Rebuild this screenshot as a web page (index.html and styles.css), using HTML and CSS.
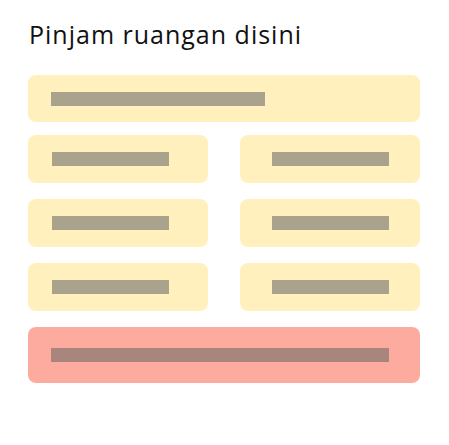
FILE: index.html
```html
<!DOCTYPE html>
<html lang="id">

<head>
    <meta charset="UTF-8">
    <meta name="viewport" content="width=device-width, initial-scale=1.0">
    <title>Pinjam ruangan</title>
    <link rel="stylesheet" href="styles.css">
</head>

<body>
    <!-- form skeleton: judul, field lebar, 3 baris 2 kolom, tombol -->
    <div class="page">
        <h1 class="title">Pinjam ruangan disini</h1>
        <div class="field wide">
            <span class="bar bar-wide"></span>
        </div>
        <div class="grid">
            <div class="field"><span class="bar"></span></div>
            <div class="field center"><span class="bar"></span></div>
            <div class="field"><span class="bar"></span></div>
            <div class="field center"><span class="bar"></span></div>
            <div class="field"><span class="bar"></span></div>
            <div class="field center"><span class="bar"></span></div>
        </div>
        <div class="button">
            <span class="bar bar-button"></span>
        </div>
    </div>
</body>

</html>
```

FILE: styles.css
```css
body {
    margin: 0;
    background: #fff;
    font-family: "Open Sans", "Liberation Sans", sans-serif;
}
.page {
    width: 392px;
    padding: 16px 0 0 28px;
}
.title {
    margin: 0 0 23px 1px;
    font-size: 25px;
    font-weight: 400;
    line-height: 36px;
    color: #111;
    letter-spacing: 1px;
}
.field {
    height: 48px;
    background-color: #fff0be;
    border-radius: 8px;
    display: flex;
    align-items: center;
    padding-left: 24px;
}
.field.wide {
    height: 47px;
    padding-left: 23px;
}
.field.center {
    justify-content: center;
    padding-left: 0;
}
.grid {
    display: grid;
    grid-template-columns: 180px 180px;
    column-gap: 32px;
    row-gap: 16px;
    margin-top: 13px;
}
.bar {
    display: block;
    width: 117px;
    height: 14px;
    background-color: #a9a28d;
}
.bar-wide {
    width: 214px;
}
.button {
    height: 56px;
    margin-top: 16px;
    background-color: #feab9f;
    border-radius: 8px;
    display: flex;
    align-items: center;
    padding-left: 23px;
}
.bar-button {
    width: 338px;
    background-color: #a8857d;
}
```
